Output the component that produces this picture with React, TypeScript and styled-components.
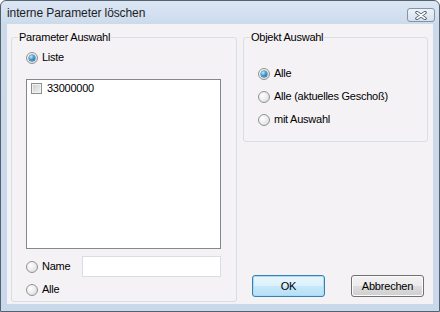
import React from "react";
import styled, { createGlobalStyle } from "styled-components";

const Global = createGlobalStyle`
  html, body { margin: 0; padding: 0; background: #ffffff; }
  body { font-family: "Liberation Sans", Arial, sans-serif; }
`;

const Window = styled.div`
  width: 440px;
  height: 312px;
  box-sizing: border-box;
  border: 1px solid #56616e;
  border-radius: 6px 6px 0 0;
  background: linear-gradient(#dce7f4, #cbdaeb 24px, #c9d8ea);
  display: flex;
  flex-direction: column;
`;

const TitleBar = styled.div`
  height: 23px;
  display: flex;
  align-items: flex-start;
  justify-content: space-between;
  padding: 0 4px 0 6px;
`;

const Title = styled.span`
  font-size: 12px;
  color: #1e1e1e;
  margin-top: 5px;
  letter-spacing: -0.1px;
`;

const CloseButton = styled.button`
  margin-top: 7px;
  width: 28px;
  height: 14px;
  padding: 0;
  box-sizing: border-box;
  border: 1px solid #8493a5;
  border-radius: 3px;
  background: linear-gradient(#eef3f9, #d6e1ee);
  display: flex;
  align-items: center;
  justify-content: center;
`;

const Body = styled.div`
  flex: 1;
  margin: 0 6px 7px 6px;
  background: #f5f2f5;
  display: grid;
  grid-template-columns: 226px 185px;
  column-gap: 6px;
  padding: 7px 0 2px 4px;
  font-size: 11px;
  letter-spacing: -0.25px;
  color: #000;
`;

const Group = styled.fieldset<{ $grow?: boolean }>`
  margin: 0;
  padding: 0;
  border: 1px solid #d5dfe6;
  border-radius: 3px;
  display: block;
  min-width: 0;
  text-align: left;
  ${(p) => (p.$grow ? "flex: 1;" : "")}
`;

const Legend = styled.legend`
  padding: 0 1px;
  margin: 0 0 0 6px;
  line-height: 13px;
  font-size: 11px;
  text-align: left;
`;

const GroupInner = styled.div<{ $pad: string }>`
  display: flex;
  flex-direction: column;
  box-sizing: border-box;
  height: 100%;
  padding: ${(p) => p.$pad};
`;

const LeftColumn = styled.div`
  display: flex;
  flex-direction: column;
`;

const RightColumn = styled.div`
  display: flex;
  flex-direction: column;
  padding-bottom: 5px;
`;

const Option = styled.label`
  display: flex;
  align-items: center;
  gap: 4px;
  height: 13px;
  line-height: 13px;
`;

const Radio = styled.span<{ $on?: boolean }>`
  position: relative;
  width: 12px;
  height: 12px;
  box-sizing: border-box;
  border-radius: 50%;
  border: 1px solid #8f9396;
  background: radial-gradient(circle at 35% 35%, #ffffff 0%, #eaeaea 55%, #cfcfcf 100%);
  flex: none;
  &::after {
    content: "";
    display: ${(p) => (p.$on ? "block" : "none")};
    position: absolute;
    left: 2px;
    top: 2px;
    width: 6px;
    height: 6px;
    border-radius: 50%;
    background: radial-gradient(circle at 35% 30%, #c8ecfb 0%, #3f9fd6 45%, #105c99 100%);
    box-shadow: 0 0 0 0.5px #1c5480;
  }
`;

const ListBox = styled.div`
  flex: 1;
  margin: 15px 0 7px 0;
  background: #ffffff;
  border: 1px solid #828790;
  padding: 2px 4px;
`;

const ListItem = styled.div`
  display: flex;
  align-items: center;
  gap: 5px;
  height: 12px;
  font-size: 11px;
`;

const CheckBox = styled.span`
  width: 11px;
  height: 11px;
  box-sizing: border-box;
  border: 1px solid #8e8f8f;
  background: linear-gradient(135deg, #cbcbcb, #f4f4f4);
  box-shadow: inset 0 0 0 1px #f2f2f2;
  flex: none;
`;

const NameRow = styled.div`
  display: flex;
  align-items: center;
  height: 21px;
  margin-bottom: 6px;
`;

const NameLabel = styled(Option)`
  width: 56px;
  flex: none;
`;

const TextInput = styled.input`
  flex: 1;
  min-width: 0;
  height: 21px;
  box-sizing: border-box;
  border: 1px solid #d9dee5;
  background: #ffffff;
  padding: 0 3px;
  font: inherit;
`;

const Options = styled.div`
  display: flex;
  flex-direction: column;
  gap: 10px;
`;

const ButtonRow = styled.div`
  margin-top: auto;
  display: flex;
  justify-content: space-between;
  padding: 0 4px 0 9px;
`;

const Button = styled.button<{ $primary?: boolean }>`
  width: 73px;
  height: 22px;
  box-sizing: border-box;
  border-radius: 3px;
  font-family: "Liberation Sans", Arial, sans-serif;
  font-size: 11px;
  letter-spacing: -0.2px;
  color: #000;
  padding: 0;
  border: 1px solid ${(p) => (p.$primary ? "#3c7fb1" : "#707070")};
  background: ${(p) =>
    p.$primary
      ? "linear-gradient(#e8f6fd 0%, #dcf1fc 50%, #c6e8fa 51%, #b7e0f6 100%)"
      : "linear-gradient(#f2f2f2 0%, #ebebeb 50%, #dddddd 51%, #cfcfcf 100%)"};
  box-shadow: inset 0 0 0 1px ${(p) => (p.$primary ? "#a7dcf6" : "#fbfbfb")};
`;

const CloseIcon = () => (
  <svg width="12" height="9" viewBox="0 0 12 9">
    <path d="M2 1.5 L10 7.5 M10 1.5 L2 7.5" stroke="#4b5868" strokeWidth="3.4" strokeLinecap="round" />
    <path d="M2 1.5 L10 7.5 M10 1.5 L2 7.5" stroke="#ffffff" strokeWidth="1.6" strokeLinecap="round" />
  </svg>
);

export default function App() {
  return (
    <>
      <Global />
      <Window>
        <TitleBar>
          <Title>interne Parameter löschen</Title>
          <CloseButton aria-label="Schließen">
            <CloseIcon />
          </CloseButton>
        </TitleBar>
        <Body>
          <LeftColumn>
            <Group $grow>
              <Legend>Parameter Auswahl</Legend>
              <GroupInner $pad="7px 15px 5px 14px">
                <Option>
                  <Radio $on />
                  Liste
                </Option>
                <ListBox>
                  <ListItem>
                    <CheckBox />
                    33000000
                  </ListItem>
                </ListBox>
                <NameRow>
                  <NameLabel>
                    <Radio />
                    Name
                  </NameLabel>
                  <TextInput />
                </NameRow>
                <Option>
                  <Radio />
                  Alle
                </Option>
              </GroupInner>
            </Group>
          </LeftColumn>
          <RightColumn>
            <Group>
              <Legend>Objekt Auswahl</Legend>
              <GroupInner $pad="23px 10px 15px 14px">
                <Options>
                  <Option>
                    <Radio $on />
                    Alle
                  </Option>
                  <Option>
                    <Radio />
                    Alle (aktuelles Geschoß)
                  </Option>
                  <Option>
                    <Radio />
                    mit Auswahl
                  </Option>
                </Options>
              </GroupInner>
            </Group>
            <ButtonRow>
              <Button $primary>OK</Button>
              <Button>Abbrechen</Button>
            </ButtonRow>
          </RightColumn>
        </Body>
      </Window>
    </>
  );
}
